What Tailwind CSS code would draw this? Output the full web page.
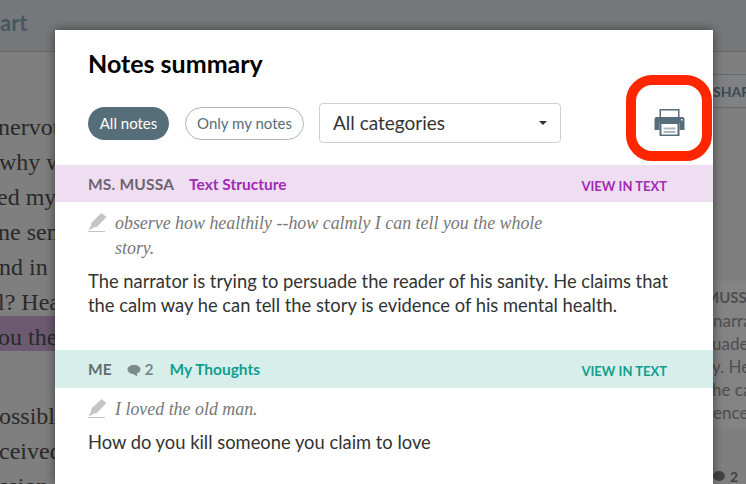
<!doctype html>
<html><head><meta charset="utf-8"><script src="https://cdn.jsdelivr.net/npm/@tailwindcss/browser@4"></script></head>
<body class="m-0">
<div class="relative w-[746px] h-[484px] overflow-hidden bg-[#7f7f7f] font-['Lato',sans-serif]">
  <!-- page behind -->
  <div class="h-[52px] bg-[#76787b] border-b border-[#66686b] pt-[9px] overflow-hidden">
    <div class="text-[22px] leading-[28px] font-bold text-[#47565f]">art</div>
  </div>
  <div class="flex justify-between h-[432px]">
    <div class="w-[200px] whitespace-nowrap font-['Liberation_Serif',serif] text-[24px] text-[#2a2a2a] pt-[58px]">
      <div class="h-[35px] leading-[35px] ml-[-2px]">nervous</div>
      <div class="h-[35px] leading-[35px] ml-[-1px]">why will</div>
      <div class="h-[35px] leading-[35px] ml-[-3px]">ed my</div>
      <div class="h-[35px] leading-[35px] ml-[-2px]">ne sense</div>
      <div class="h-[35px] leading-[35px] ml-[-1px]">nd in</div>
      <div class="h-[35px] leading-[35px] ml-[-2px]">l? Hear</div>
      <div class="h-[35px] mt-[-4px] pt-[4px] leading-[35px] bg-[#6c5a70]"><span class="ml-[-2px]">ou the</span></div>
      <div class="h-[48px]"></div>
      <div class="h-[35px] leading-[35px] ml-[-1px]">ossible</div>
      <div class="h-[35px] leading-[35px] ml-[-1px]">ceived</div>
      <div class="h-[35px] leading-[35px] ml-[-1px]">ssion</div>
    </div>
    <div class="w-[180px] flex flex-col">
      <div class="mt-[22px] h-[35px] border-y border-[#66686b] flex items-center justify-end bg-[#808183]">
        <span class="text-[14px] font-bold text-[#3d4a52] w-[33px] overflow-hidden whitespace-nowrap">SHARE</span>
      </div>
      <div class="mt-[173px] h-[150px] bg-[#848484] pl-[147px] overflow-hidden whitespace-nowrap text-[17px] leading-[23px] text-[#4f4f4f] pt-[5px]">
        <div class="font-bold text-[15px] ml-[-8px]">MUSSA</div>
        <div>narra</div>
        <div class="ml-[-1px]">uade</div>
        <div class="ml-[-1px]">y. He</div>
        <div class="ml-[-1px]">he ca</div>
        <div>ence</div>
      </div>
      <div class="mt-[40px] flex items-center justify-end h-[16px] text-[14px] font-bold text-[#444]">
        <span class="w-[33px] flex items-center gap-[5px]"><svg class="w-[12px] h-[10px]" viewBox="0 0 14 12"><ellipse cx="7" cy="6" rx="7" ry="6" fill="#444"/></svg>2</span>
      </div>
    </div>
  </div>
  <!-- modal -->
  <div class="absolute left-[55px] top-[30px] w-[658px] h-[454px] bg-white shadow-[0_0_10px_rgba(0,0,0,0.5)]">
    <h1 class="pl-[33px] pt-[17px] text-[25px] leading-[32px] font-bold text-black">Notes summary</h1>
    <div class="flex items-center pl-[33px] mt-[24px] h-[40px]">
      <span class="w-[81px] h-[33px] rounded-full bg-[#566e7a] text-white text-[15px] flex items-center justify-center">All notes</span>
      <span class="ml-[16px] w-[119px] h-[33px] rounded-full border border-[#aab6bd] text-[#566e7a] text-[15px] flex items-center justify-center">Only my notes</span>
      <div class="ml-[15px] w-[242px] h-[40px] rounded border border-[#cfcfcf] flex items-center justify-between pl-[13px] pr-[13px] text-[19px] text-[#333]">
        <span>All categories</span>
        <span class="w-0 h-0 border-x-[4px] border-x-transparent border-t-[4px] border-t-[#333]"></span>
      </div>
    </div>
    <div class="mt-[22px] h-[37px] bg-[#efdef1] flex items-center pl-[33px] pr-[46px] pt-[2px]">
      <span class="font-bold text-[15.5px] text-[#6b6470] tracking-[0.2px]">MS. MUSSA</span>
      <span class="ml-[15px] font-bold text-[15.5px] text-[#a12bb5]">Text Structure</span>
      <span class="ml-auto font-bold text-[13px] text-[#a12bb5] pt-[4px]">VIEW IN TEXT</span>
    </div>
    <div class="flex pl-[33px] pt-[11px]">
      <svg class="w-[19px] h-[19px] shrink-0" viewBox="0 0 19 19"><path d="M13.5 0 L18.5 4 L9 13.8 L4.5 15 L3 16.5 L0.5 16.5 L3 13 L3.5 9.5 Z" fill="#c4c4c4"/><rect x="0" y="18" width="17" height="1" fill="#c4c4c4"/></svg>
      <p class="ml-[8px] mt-[-2px] w-[440px] font-['Liberation_Serif',serif] italic text-[17.9px] leading-[25px] text-[#777]">observe how healthily --how calmly I can tell you the whole story.</p>
    </div>
    <p class="pl-[33px] pt-[8px] w-[620px] text-[18.35px] leading-[24px] text-[#333]">The narrator is trying to persuade the reader of his sanity. He claims that the calm way he can tell the story is evidence of his mental health.</p>
    <div class="mt-[33px] h-[38px] bg-[#d8eeeb] flex items-center pl-[33px] pr-[46px] pt-[2px]">
      <span class="font-bold text-[15.5px] text-[#5f6f70]">ME</span>
      <svg class="ml-[15px] w-[14px] h-[13px]" viewBox="0 0 14 13"><path d="M7 1C3.2 1 0.5 3 0.5 5.5 C0.5 7.8 2.8 9.6 6 9.9 L10.5 12.5 L9.8 9.4 C12 8.6 13.5 7.2 13.5 5.5 C13.5 3 10.8 1 7 1Z" fill="#7b8a8a"/></svg>
      <span class="ml-[4px] font-bold text-[15.5px] text-[#7b8a8a]">2</span>
      <span class="ml-[16px] font-bold text-[15.5px] text-[#109f8e]">My Thoughts</span>
      <span class="ml-auto font-bold text-[13px] text-[#109f8e] pt-[4px]">VIEW IN TEXT</span>
    </div>
    <div class="flex pl-[33px] pt-[11px]">
      <svg class="w-[19px] h-[19px] shrink-0" viewBox="0 0 19 19"><path d="M13.5 0 L18.5 4 L9 13.8 L4.5 15 L3 16.5 L0.5 16.5 L3 13 L3.5 9.5 Z" fill="#c4c4c4"/><rect x="0" y="18" width="17" height="1" fill="#c4c4c4"/></svg>
      <p class="ml-[8px] mt-[-2px] font-['Liberation_Serif',serif] italic text-[17.9px] leading-[25px] text-[#777]">I loved the old man.</p>
    </div>
    <p class="pl-[33px] pt-[8px] text-[18.35px] leading-[24px] text-[#333]">How do you kill someone you claim to love</p>
  </div>
  <!-- callout -->
  <div class="absolute left-[626px] top-[75px] w-[86px] h-[86px] rounded-[26px] border-[10px] border-[#ff2600] flex items-center justify-center">
    <svg class="w-[31px] h-[27px] mt-[9px]" viewBox="0 0 30 27"><path d="M5 0H25V8H5Z" fill="#566e7a"/><path d="M6.5 1.5H23.5V8H6.5Z" fill="#fff"/><path d="M2 8H28A2 2 0 0 1 30 10V21H25V14H5V21H0V10A2 2 0 0 1 2 8Z" fill="#566e7a"/><rect x="26.5" y="10" width="1.5" height="1.5" fill="#fff"/><path d="M5 13H25V27H5Z" fill="#566e7a"/><path d="M7 15H23V25.5H7Z" fill="#fff"/><path d="M9 18.5H21V20.5H9ZM9 22H21V24H9Z" fill="#a9b7bd"/></svg>
  </div>
</div>
</body></html>
